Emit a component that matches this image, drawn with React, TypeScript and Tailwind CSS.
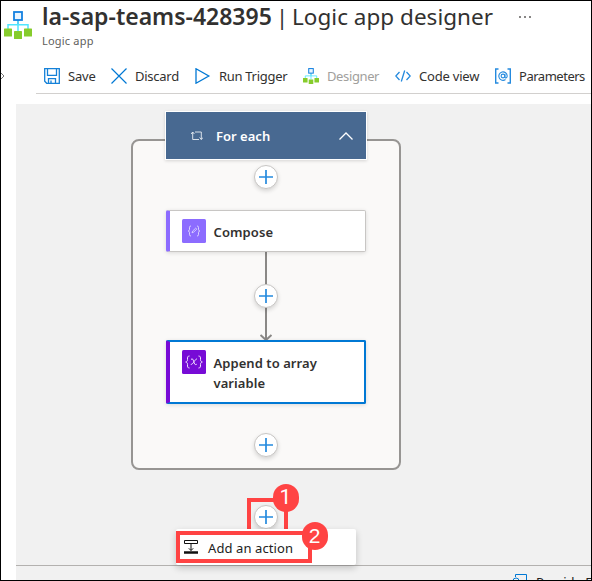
import type { ReactNode } from "react";

function DesignerIcon({ size }: { size: number }) {
  return (
    <svg width={size} height={size} viewBox="0 0 28 28" fill="none" className="shrink-0">
      <path d="M14 9v11M4 18v-4.2h20V18" stroke="#50e6ff" strokeWidth="1.5" />
      <path d="M14 9v4" stroke="#50c8f0" strokeWidth="1.5" />
      <rect x="10" y="1" width="8" height="8" fill="#eaf5ff" stroke="#1481e0" strokeWidth="1.8" />
      <rect x="0" y="17.5" width="8" height="8" rx=".6" fill="#86cc2c" />
      <rect x="10" y="20" width="8" height="8" rx=".6" fill="#86cc2c" />
      <rect x="20" y="17.5" width="8" height="8" rx=".6" fill="#86cc2c" />
    </svg>
  );
}

function Command({ icon, label, width, tracking, muted = false }: { icon: ReactNode; label: string; width: string; tracking: string; muted?: boolean }) {
  return (
    <div className={`flex shrink-0 items-center ${width} ${muted ? "text-[#a19f9d]" : "text-[#323130]"}`}>
      <span className="flex h-4 w-6 shrink-0 items-center">{icon}</span>
      <span className={`whitespace-nowrap pt-px text-[13px] leading-5 ${tracking}`}>{label}</span>
    </div>
  );
}

function Plus({ top }: { top: string }) {
  return (
    <span className={`absolute left-[238px] ${top} flex size-6 items-center justify-center rounded-full border border-[#c8c6c4] bg-white shadow-[0_2px_4px_rgba(0,0,0,0.15)]`}>
      <svg width="14" height="14" viewBox="0 0 14 14" stroke="#258ade" strokeWidth="1.7">
        <path d="M7 0v14M0 7h14" />
      </svg>
    </span>
  );
}

export default function App() {
  return (
    <div className="flex h-[581px] w-[592px] flex-col overflow-hidden border border-black bg-white font-['Noto_Sans','Open_Sans',sans-serif] text-[#323130]">
      <header className="flex h-[54px] shrink-0">
        <div className="w-[41px] shrink-0 pl-[3px] pt-[10px]">
          <DesignerIcon size={28} />
        </div>
        <div className="flex flex-col">
          <h1 className="flex whitespace-pre leading-[31px]">
            <span className="w-[234px] text-[23px] font-semibold">la-sap-teams-428395</span>
            <span className="w-[16px] text-[22px]">|</span>
            <span className="w-[202px] text-[22.5px] tracking-[0.02px]">Logic app designer</span>
            <span className="ml-[25px] flex gap-[3px] pt-[15px]">
              <i className="size-[2px] rounded-full bg-[#605e5c]" />
              <i className="size-[2px] rounded-full bg-[#605e5c]" />
              <i className="size-[2px] rounded-full bg-[#605e5c]" />
            </span>
          </h1>
          <p className="text-[11px] leading-[18px] tracking-[0.2px] text-[#605e5c]">Logic app</p>
        </div>
      </header>

      <div className="flex h-[49px] shrink-0">
        <div className="w-[35px] shrink-0 pt-[17px]">
          <svg width="4" height="8" viewBox="0 0 4 8" fill="none" stroke="#777"><path d="M0 1l3 3-3 3" /></svg>
        </div>
        <nav className="flex h-[39px] flex-1 items-start border-b border-[#d2d0ce] pl-2 pt-[10px]">
          <Command width="w-[67px]" tracking="tracking-[-0.2px]" label="Save" icon={
            <svg width="16" height="16" viewBox="0 0 16 16" fill="none" stroke="#1481d8" strokeWidth="1.3">
              <path d="M.7.7h14.6v14.6H2.7l-2-2zM3.5.7v6.6h9V.7M4.5 15v-4.3h7V15M7 12.5V15" />
            </svg>
          } />
          <Command width="w-[84px]" tracking="tracking-[-0.25px]" label="Discard" icon={
            <svg width="16" height="16" viewBox="0 0 16 16" stroke="#0078d4" strokeWidth="1.2"><path d="M.5.5l15 15M15.5.5l-15 15" /></svg>
          } />
          <Command width="w-[108px]" tracking="tracking-[-0.3px]" label="Run Trigger" icon={
            <svg width="16" height="16" viewBox="0 0 16 16" fill="none" stroke="#0078d4" strokeWidth="1.3"><path d="M1 .8v14.4L13.8 8z" /></svg>
          } />
          <Command width="w-[92px]" tracking="tracking-[-0.38px]" label="Designer" muted icon={<DesignerIcon size={16} />} />
          <Command width="w-[100px]" tracking="tracking-[-0.2px]" label="Code view" icon={
            <svg width="16" height="16" viewBox="0 0 16 16" fill="none" stroke="#258ade" strokeWidth="1.3"><path d="M4.5 4L.8 8l3.7 4M11.5 4l3.7 4-3.7 4M9.7 2.5l-3.4 11" /></svg>
          } />
          <Command width="w-[91px]" tracking="tracking-[-0.48px]" label="Parameters" icon={
            <svg width="16" height="16" viewBox="0 0 16 16" fill="none" stroke="#258ade" strokeWidth="1.1">
              <path d="M3.5 1H.7v14h2.8M12.5 1h2.8v14h-2.8" strokeWidth="1.4" />
              <circle cx="8" cy="8" r="1.9" /><path d="M9.9 6v3c0 1.5 2.3 1.2 2.3-1A4.2 4.2 0 1 0 10.5 11.5" />
            </svg>
          } />
        </nav>
      </div>

      <main className="relative ml-[15px] h-[462px] shrink-0 border-b border-[#b3b1af] bg-[#f1f1f1]">
        <section className="absolute left-[115px] top-[35px] h-[331px] w-[270px] rounded-[8px] border-2 border-[#979593] bg-[#faf9f8]" />
        <div className="absolute left-[149px] top-[7px] flex h-[49px] w-[202px] items-center border border-white bg-[#486991] text-white shadow-[0_1px_3px_rgba(0,0,0,0.15)]">
          <svg className="ml-[25px]" width="12" height="10" viewBox="0 0 12 10" fill="none" stroke="#e8edf3" strokeWidth=".9">
            <path d="M0 3l1.7-2 1.7 2M1.7 1v7.5H8M4 1h6.3v7.5M8.6 6.5l1.7 2 1.7-2" />
          </svg>
          <span className="ml-[13px] w-[62px] whitespace-nowrap pt-0.5 text-[13px] font-semibold tracking-[0.02px]">For each</span>
          <svg className="ml-[61px]" width="14" height="8" viewBox="0 0 14 8" fill="none" stroke="white" strokeWidth="1.3"><path d="M.5 7.5L7 1l6.5 6.5" /></svg>
        </div>

        <svg className="absolute left-[243px] top-[148px]" width="14" height="89" viewBox="0 0 14 89" fill="none" stroke="#8a8886" strokeWidth="2">
          <path d="M7 0v88M1.5 83L7 88l5.5-5" />
        </svg>
        <div className="absolute left-[150px] top-[106px] flex h-[42px] w-[200px] rounded-[2px] border border-l-4 border-[#c8c6c4] border-l-[#8c6cff] bg-white shadow-[0_1px_4px_rgba(0,0,0,0.13)]">
          <svg className="ml-3 mt-2" width="24" height="24" viewBox="0 0 24 24" fill="none" stroke="#e5deff">
            <rect width="24" height="24" rx="1.5" fill="#8c6cff" stroke="none" />
            <path d="M9 7C7.3 7 7.5 8 7.5 10c0 1-.3 1.8-1.3 2 1 .2 1.3 1 1.3 2 0 2-.2 3 1.5 3M15 7c1.7 0 1.5 1 1.5 3 0 1 .3 1.8 1.3 2-1 .2-1.3 1-1.3 2 0 2 .2 3-1.5 3" strokeWidth=".9" />
            <path d="M10 13.8l.6-1.7 3.1-3 1.1 1-3.1 3z" strokeWidth=".8" />
          </svg>
          <span className="ml-[7.5px] mt-[11px] text-[13px] font-semibold leading-5 tracking-[0.1px]">Compose</span>
        </div>
        <div className="absolute left-[150px] top-[236px] flex h-[64px] w-[200px] rounded-[2px] border-2 border-l-4 border-[#0078d4] border-l-[#770bd6] bg-white shadow-[0_1px_4px_rgba(0,0,0,0.13)]">
          <svg className="ml-3 mt-2 shrink-0" width="24" height="24" viewBox="0 0 24 24" fill="none" stroke="#f3e8ff">
            <rect width="24" height="24" rx="1.5" fill="#770bd6" stroke="none" />
            <path d="M7.5 6C5.5 6 5.5 7 5.5 9.5c0 1.5-.4 2.1-1.8 2.5 1.4.4 1.8 1 1.8 2.5 0 2.5 0 3.5 2 3.5M16.5 6c2 0 2 1 2 3.5 0 1.5.4 2.1 1.8 2.5-1.4.4-1.8 1-1.8 2.5 0 2.5 0 3.5-2 3.5" />
            <path d="M9 9.3c1.8-1 2.2.3 2.7 2.2.6 2.3 1.3 3.8 3 2.8M15 9c-2-.4-3.8 5.7-6.2 5.4" />
          </svg>
          <span className="ml-[7.5px] mt-[11px] w-[115px] text-[13px] font-semibold leading-5 tracking-[0.06px]">Append to array variable</span>
        </div>
        <Plus top="top-[61px]" />
        <Plus top="top-[180px]" />
        <Plus top="top-[329px]" />
        <Plus top="top-[401px]" />

        <div className="absolute left-[231px] top-[394px] h-[37px] w-[41px] border-4 border-[#ff4343]" />
        <div className="absolute left-[160px] top-[425px] h-[36px] w-[180px] rounded-[2px] bg-white shadow-[0_3px_7px_rgba(0,0,0,0.2)]">
          <div className="mt-[2px] flex h-8 w-[136px] items-center border-4 border-[#ff4343] pl-1">
            <svg width="14" height="14" viewBox="0 0 14 14" fill="none" stroke="#111">
              <path d="M.5 3.5v-3h13v3zM7 3.5v7M4.8 8.3L7 10.5l2.2-2.2" /><path d="M0 12.5h14" strokeWidth="2.5" />
            </svg>
            <span className="ml-[10px] whitespace-nowrap pt-[3px] text-[13px] tracking-[0.1px] text-[#222]">Add an action</span>
          </div>
        </div>
        <div className="absolute left-[231px] top-[427px] h-1 w-[41px] bg-[#ff4343]" />
        <span className="absolute left-[256.5px] top-[379.5px] flex h-[28px] w-[26px] items-center justify-center rounded-full bg-[#ff4343] font-['Roboto'] text-[21px] text-white">1</span>
        <span className="absolute left-[285.5px] top-[418px] flex h-[28px] w-[26px] items-center justify-center rounded-full bg-[#ff4343] font-['Liberation_Sans'] text-[21px] text-white">2</span>
      </main>
      <footer className="ml-[15px] flex h-[14px] shrink-0 items-start overflow-hidden bg-[#f1f1f1] pl-[497px] pt-[7px]">
        <svg className="shrink-0" width="15" height="15" viewBox="0 0 15 15" fill="none" stroke="#0078d4"><path d="M2.5 4V1.5h11V14M0 8a3 3 0 0 1 6 0" /></svg>
        <span className="ml-[8px] mt-[-1px] whitespace-nowrap text-[13px] leading-5 text-[#222]">Provide F</span>
      </footer>
    </div>
  );
}
